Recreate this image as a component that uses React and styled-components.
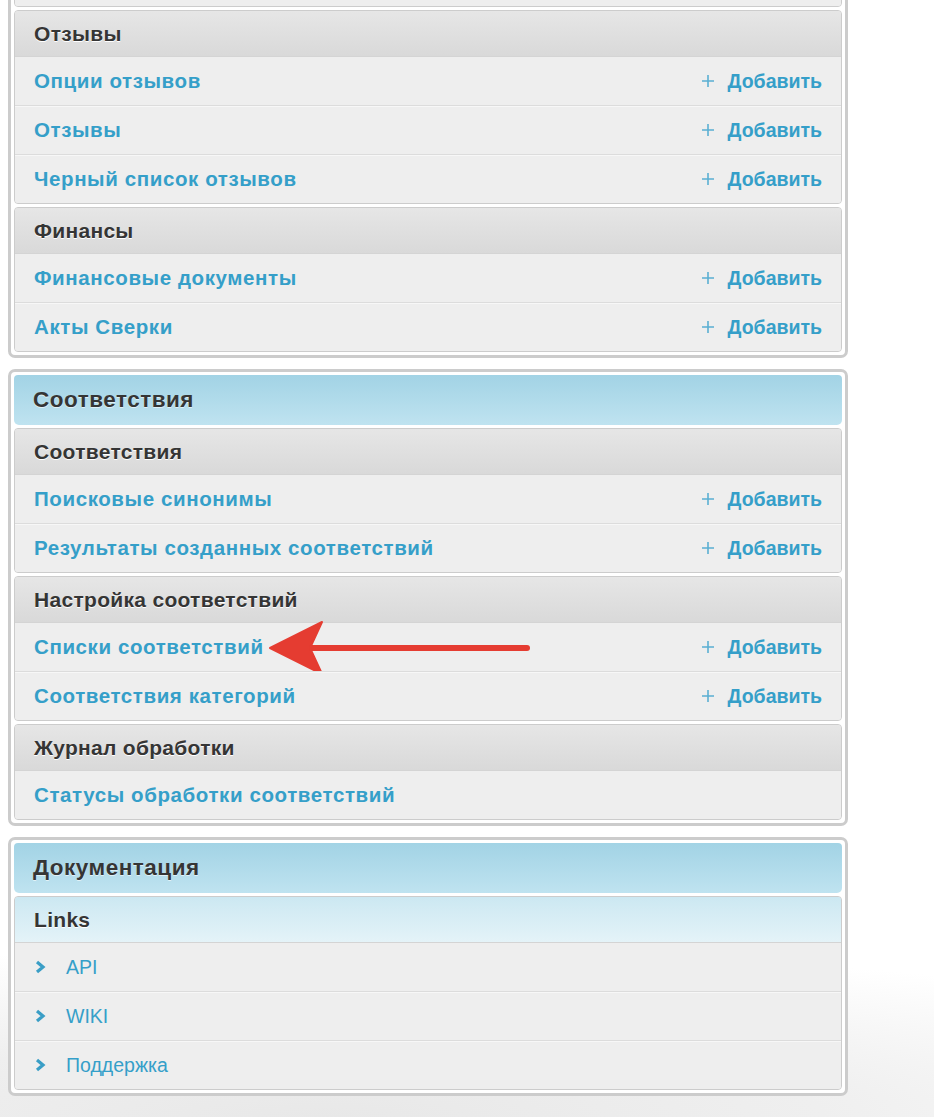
import React from 'react';
import styled, { createGlobalStyle } from 'styled-components';

const GlobalStyle = createGlobalStyle`
  html, body {
    margin: 0;
    padding: 0;
  }
  body {
    min-height: 1117px;
    font-family: "Liberation Sans", Arial, sans-serif;
    background: radial-gradient(ellipse 1100px 170px at 35% 1117px, #e8e8e8 0%, #efefef 45%, #ffffff 100%);
    overflow: hidden;
  }
`;

const sections = [
  {
    modules: [
      { title: 'Прочее', rows: [{ label: 'Настройки', add: true }] },
      {
        title: 'Отзывы',
        rows: [
          { label: 'Опции отзывов', add: true },
          { label: 'Отзывы', add: true },
          { label: 'Черный список отзывов', add: true },
        ],
      },
      {
        title: 'Финансы',
        rows: [
          { label: 'Финансовые документы', add: true },
          { label: 'Акты Сверки', add: true },
        ],
      },
    ],
  },
  {
    caption: 'Соответствия',
    modules: [
      {
        title: 'Соответствия',
        rows: [
          { label: 'Поисковые синонимы', add: true },
          { label: 'Результаты созданных соответствий', add: true },
        ],
      },
      {
        title: 'Настройка соответствий',
        rows: [
          { label: 'Списки соответствий', add: true, arrow: true },
          { label: 'Соответствия категорий', add: true },
        ],
      },
      {
        title: 'Журнал обработки',
        rows: [{ label: 'Статусы обработки соответствий' }],
      },
    ],
  },
  {
    caption: 'Документация',
    modules: [
      {
        title: 'Links',
        light: true,
        rows: [
          { label: 'API', link: true },
          { label: 'WIKI', link: true },
          { label: 'Поддержка', link: true },
        ],
      },
    ],
  },
];

const Page = styled.div`
  width: 840px;
  margin: -95px 0 0 8px;
  display: flex;
  flex-direction: column;
  gap: 11px;
`;

const Panel = styled.div`
  border: 3px solid #cccccc;
  border-radius: 7px;
  padding: 3px;
  background: #ffffff;
  display: flex;
  flex-direction: column;
  gap: 3px;
`;

const Caption = styled.div`
  height: 50px;
  display: flex;
  align-items: center;
  padding: 0 19px;
  border-radius: 4px 4px 5px 5px;
  background: linear-gradient(to bottom, #a2d3e5, #bfe3f0);
  color: #353535;
  font-size: 22.5px;
  letter-spacing: 0.5px;
  font-weight: bold;
  text-shadow: 0 1px 0 rgba(255, 255, 255, 0.6);
`;

const Module = styled.div`
  border: 1px solid #cccccc;
  border-radius: 4px;
  overflow: hidden;
  background: #eeeeee;
`;

const ModuleHeader = styled.div`
  height: 45px;
  display: flex;
  align-items: center;
  padding: 0 19px;
  border-bottom: 1px solid #d4d4d4;
  background: ${p =>
    p.$light
      ? 'linear-gradient(to bottom, #cce8f2, #e4f3f8)'
      : 'linear-gradient(to bottom, #e6e6e6, #d9d9d9)'};
  color: #353535;
  font-size: 21px;
  letter-spacing: 0.3px;
  font-weight: bold;
  text-shadow: 0 1px 0 #ffffff;
`;

const Row = styled.div`
  position: relative;
  height: 48px;
  display: flex;
  align-items: center;
  justify-content: space-between;
  padding: 0 19px;
  background: #eeeeee;
  & + & {
    border-top: 1px solid #dcdcdc;
    box-shadow: inset 0 1px 0 #f7f7f7;
  }
`;

const RowLink = styled.a`
  color: #359fc9;
  font-size: ${p => (p.$plain ? '19.5px' : '20.5px')};
  letter-spacing: ${p => (p.$plain ? '0' : '0.6px')};
  font-weight: ${p => (p.$plain ? 'normal' : 'bold')};
  text-decoration: none;
  display: flex;
  align-items: center;
  gap: 19px;
`;

const AddLink = styled.a`
  display: flex;
  align-items: center;
  gap: 13px;
  color: #359fc9;
  font-size: 19.5px;
  font-weight: bold;
  text-decoration: none;
`;

const Arrow = styled.svg`
  position: absolute;
  left: 239px;
  top: -3px;
  pointer-events: none;
`;

const Plus = () => (
  <svg width="14" height="14" viewBox="0 0 14 14">
    <path d="M7 1v12M1 7h12" stroke="#5aafd2" strokeWidth="1.6" />
  </svg>
);

const Chevron = () => (
  <svg width="13" height="16" viewBox="0 0 13 16">
    <path d="M3 3l6 5-6 5" fill="none" stroke="#3a9ec6" strokeWidth="3.2" />
  </svg>
);

const RedArrow = () => (
  <Arrow width="290" height="56" viewBox="0 0 290 56">
    <path d="M56 28H273" stroke="#e53c31" strokeWidth="6" strokeLinecap="round" />
    <path d="M16 28L68 2L56 28L68 54Z" fill="#e53c31" stroke="#e53c31" strokeWidth="2" strokeLinejoin="round" />
  </Arrow>
);

const App = () => (
  <>
    <GlobalStyle />
    <Page>
      {sections.map((s, i) => (
        <Panel key={i}>
          {s.caption && <Caption>{s.caption}</Caption>}
          {s.modules.map(m => (
            <Module key={m.title}>
              <ModuleHeader $light={m.light}>{m.title}</ModuleHeader>
              {m.rows.map(r => (
                <Row key={r.label}>
                  <RowLink href="#" $plain={r.link}>
                    {r.link && <Chevron />}
                    {r.label}
                  </RowLink>
                  {r.add && (
                    <AddLink href="#">
                      <Plus />
                      Добавить
                    </AddLink>
                  )}
                  {r.arrow && <RedArrow />}
                </Row>
              ))}
            </Module>
          ))}
        </Panel>
      ))}
    </Page>
  </>
);

export default App;
